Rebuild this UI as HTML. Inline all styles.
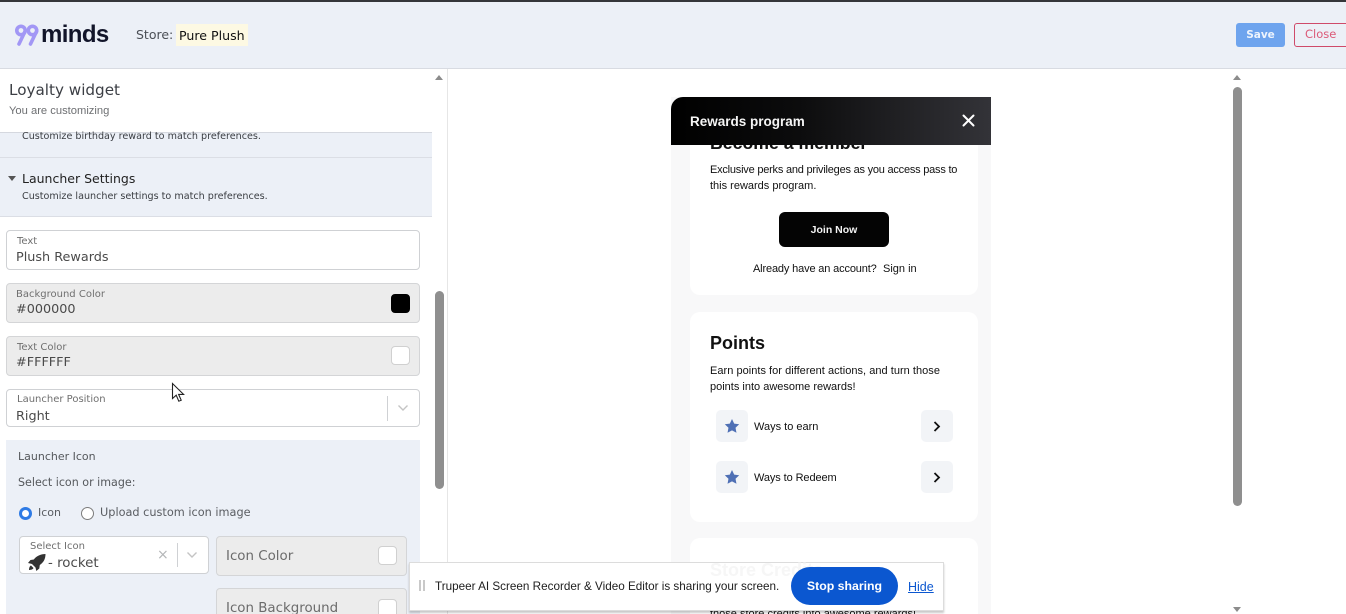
<!DOCTYPE html>
<html><head><meta charset="utf-8">
<style>
html,body{margin:0;padding:0;width:1346px;height:614px;overflow:hidden;background:#fff}
body{position:relative;font-family:"Liberation Sans",sans-serif;color:#333}
.a{position:absolute;white-space:nowrap}
.p{font-family:"DejaVu Sans",sans-serif}
.box{position:absolute;box-sizing:border-box;border:1px solid #cfd1d4;border-radius:4px;background:#fff}
.dis{background:#ececec;border-color:#d4d5d7}
.lab{font-size:10px;color:#6f6f6f;font-family:"DejaVu Sans",sans-serif}
.val{font-size:12.8px;color:#4a4a4a;font-family:"DejaVu Sans",sans-serif}
.sw{position:absolute;box-sizing:border-box;width:19px;height:19px;border-radius:4px;background:#fff;border:1px solid #d0d0d0}
.l{font-family:"Liberation Sans",sans-serif;color:#111;font-size:11px;line-height:16px}
.card{position:absolute;left:690px;width:288px;background:#fff;border-radius:10px}
.ic{position:absolute;width:32px;height:32px;background:#f2f4f7;border-radius:5px}
</style></head><body>

<div class="a" style="left:0;top:0;width:1346px;height:2px;background:#35363a"></div>
<div class="a" style="left:0;top:2px;width:1346px;height:66px;background:#ecf0f7"></div>
<div class="a" style="left:0;top:68px;width:1346px;height:1px;background:#d8dbe2"></div>

<svg class="a" style="left:14px;top:24px" width="27" height="22" viewBox="0 0 27 22">
<g fill="none" stroke="#a297f5" stroke-width="3.600" stroke-linecap="round">
<circle cx="7" cy="6.500" r="4.200"/><path d="M11 7.500 5 20"/>
<circle cx="18.500" cy="6.500" r="4.200"/><path d="M22.500 7.500 16.500 20"/></g></svg>
<div class="a" style="left:41px;top:20px;font-size:24px;line-height:30px;font-weight:700;color:#12152a;letter-spacing:-.6px;font-family:'Liberation Sans',sans-serif">minds</div>
<div class="a p" style="left:136px;top:26px;font-size:12.500px;line-height:17px;color:#4b4f56">Store:</div>
<div class="a" style="left:176px;top:24px;width:72px;height:22px;background:#fdf9e3"></div>
<div class="a p" style="left:179px;top:27px;font-size:12.600px;line-height:17px;color:#111">Pure Plush</div>

<div class="a" style="left:1236px;top:23px;width:49px;height:24px;background:#6ea4ee;border-radius:3px;color:#eef4fd;font-size:10.500px;font-weight:700;text-align:center;line-height:24px;font-family:'DejaVu Sans',sans-serif">Save</div>
<div class="a" style="left:1294px;top:23px;width:60px;height:24px;box-sizing:border-box;border:1px solid #cf4a6a;border-radius:3px;color:#db5a78;font-size:11.500px;line-height:21px;padding-left:10px;font-family:'DejaVu Sans',sans-serif">Close</div>

<!-- left panel -->
<div class="a" style="left:0;top:69px;width:432px;height:63px;background:#fff"></div>
<div class="a p" style="left:9px;top:80px;font-size:15.200px;line-height:20px;color:#3c3f45">Loyalty widget</div>
<div class="a" style="left:9px;top:104px;font-size:11.200px;line-height:15px;color:#6d6f72">You are customizing</div>

<div class="a" style="left:0;top:132px;width:432px;height:85px;background:#ecf0f7"></div>
<div class="a" style="left:0;top:132px;width:432px;height:1px;background:#d5d8df"></div>
<div class="a" style="left:0;top:157px;width:432px;height:1px;background:#dbdee5"></div>
<div class="a" style="left:0;top:216px;width:432px;height:1px;background:#dbdee5"></div>
<div class="a p" style="left:22px;top:130px;font-size:9.600px;line-height:14px;color:#3a3d42">Customize birthday reward to match preferences.</div>
<div class="a" style="left:8px;top:176px;width:0;height:0;border-left:4.500px solid transparent;border-right:4.500px solid transparent;border-top:5px solid #555"></div>
<div class="a p" style="left:22px;top:170px;font-size:12.500px;line-height:17px;color:#222">Launcher Settings</div>
<div class="a p" style="left:22px;top:190px;font-size:9.600px;line-height:14px;color:#3a3d42">Customize launcher settings to match preferences.</div>

<div class="box" style="left:6px;top:230px;width:414px;height:40px"></div>
<div class="a lab" style="left:17px;top:235px;line-height:13px">Text</div>
<div class="a val" style="left:16px;top:249px;line-height:17px">Plush Rewards</div>

<div class="box dis" style="left:6px;top:283px;width:414px;height:40px"></div>
<div class="a lab" style="left:16px;top:288px;line-height:13px">Background Color</div>
<div class="a val" style="left:16px;top:301px;line-height:17px">#000000</div>
<div class="sw" style="left:391px;top:294px;background:#000;border-color:#000"></div>

<div class="box dis" style="left:6px;top:336px;width:414px;height:40px"></div>
<div class="a lab" style="left:17px;top:341px;line-height:13px">Text Color</div>
<div class="a val" style="left:16px;top:354px;line-height:17px">#FFFFFF</div>
<div class="sw" style="left:391px;top:346px"></div>

<div class="box" style="left:6px;top:389px;width:414px;height:38px"></div>
<div class="a lab" style="left:17px;top:393px;line-height:13px">Launcher Position</div>
<div class="a val" style="left:16px;top:408px;line-height:17px">Right</div>
<div class="a" style="left:387px;top:396px;width:1px;height:25px;background:#cfd1d4"></div>
<svg class="a" style="left:397px;top:403px" width="12" height="10" viewBox="0 0 12 10"><path d="M1.500 2.500 6 7l4.500-4.500" fill="none" stroke="#c4c4c4" stroke-width="1.400"/></svg>

<!-- cursor -->
<svg class="a" style="left:171px;top:382px;z-index:3" width="15" height="21" viewBox="0 0 15 21"><path d="M1.500 1.500v15l3.700-3.300 2.600 6 2.400-1-2.600-5.800h5z" fill="#fff" stroke="#222" stroke-width="1.100"/></svg>

<div class="a" style="left:6px;top:440px;width:414px;height:174px;background:#ecf0f7"></div>
<div class="a p" style="left:18px;top:450px;font-size:11px;line-height:14px;color:#55585c">Launcher Icon</div>
<div class="a p" style="left:18px;top:476px;font-size:11.100px;line-height:14px;color:#55585c">Select icon or image:</div>
<div class="a" style="left:19px;top:507px;width:13px;height:13px;box-sizing:border-box;border-radius:50%;background:#fff;border:3.500px solid #2f7be5"></div>
<div class="a p" style="left:38px;top:506px;font-size:11px;line-height:14px;color:#5a5d62">Icon</div>
<div class="a" style="left:81px;top:507px;width:13px;height:13px;box-sizing:border-box;border-radius:50%;background:#fff;border:1px solid #7c7c7c"></div>
<div class="a p" style="left:100px;top:506px;font-size:11.300px;line-height:14px;color:#5a5d62">Upload custom icon image</div>

<div class="box" style="left:19px;top:536px;width:190px;height:38px"></div>
<div class="a lab" style="left:30px;top:540px;line-height:13px">Select Icon</div>
<svg class="a" style="left:28px;top:554px" width="18" height="17" viewBox="0 0 18 17"><path d="M17.500 0C12.500 0 8.500 2 5.800 5.500L2.500 6 0 9l4 1 3.500 3.500.8 3.500 3-2.500.5-3.500C15.500 8.500 17.500 5 17.500 0zM3 11.500C1.500 12 1 14.500 1 16c1.500 0 4-.5 4.500-2z" fill="#333"/></svg>
<div class="a val" style="left:48px;top:555px;line-height:17px;font-size:13.400px">- rocket</div>
<div class="a" style="left:157px;top:547px;font-size:14px;line-height:16px;color:#b4b6b8;font-family:'DejaVu Sans',sans-serif">×</div>
<div class="a" style="left:177px;top:543px;width:1px;height:24px;background:#cfd1d4"></div>
<svg class="a" style="left:186px;top:550px" width="12" height="10" viewBox="0 0 12 10"><path d="M1.500 2.500 6 7l4.500-4.500" fill="none" stroke="#c4c4c4" stroke-width="1.400"/></svg>

<div class="box dis" style="left:216px;top:536px;width:191px;height:40px"></div>
<div class="a val" style="left:226px;top:548px;line-height:17px;font-size:13.400px;color:#6b6b6b">Icon Color</div>
<div class="sw" style="left:378px;top:546px"></div>
<div class="box dis" style="left:216px;top:588px;width:191px;height:40px"></div>
<div class="a val" style="left:226px;top:600px;line-height:17px;font-size:13.400px;color:#6b6b6b">Icon Background</div>
<div class="sw" style="left:378px;top:599px"></div>

<!-- left scrollbar -->
<div class="a" style="left:447px;top:69px;width:1px;height:545px;background:#e6e6e6"></div>
<div class="a" style="left:435px;top:75px;width:0;height:0;border-left:4.500px solid transparent;border-right:4.500px solid transparent;border-bottom:5px solid #8c8c8c"></div>
<div class="a" style="left:435px;top:291px;width:9px;height:198px;background:#8f8f8f;border-radius:5px"></div>

<!-- widget -->
<div class="a" style="left:671px;top:97px;width:320px;height:517px;background:#f8f8f9"></div>
<div class="card" style="top:130px;height:165px"></div>
<div class="a" style="left:710px;top:131px;font-size:17.700px;line-height:24px;font-weight:700;color:#111">Become a member</div>
<div class="a" style="left:671px;top:97px;width:320px;height:48px;border-radius:12px 0 0 0;background:linear-gradient(90deg,#000 0%,#0c0c0d 40%,#333338 100%)"></div>
<div class="a" style="left:690px;top:113px;font-size:13.500px;line-height:18px;font-weight:700;color:#f5f5f5">Rewards program</div>
<svg class="a" style="left:962px;top:114px" width="13" height="13" viewBox="0 0 13 13"><path d="M1.500 1.500l10 10m0-10l-10 10" stroke="#fff" stroke-width="2" stroke-linecap="round"/></svg>

<div class="a l" style="left:710px;top:162px;letter-spacing:-.22px">Exclusive perks and privileges as you access pass to</div>
<div class="a l" style="left:710px;top:178px">this rewards program.</div>
<div class="a" style="left:779px;top:212px;width:110px;height:35px;background:#040404;border-radius:6px;color:#f3f3f3;font-size:10.500px;font-weight:700;text-align:center;line-height:36px">Join Now</div>
<div class="a l" style="left:753px;top:261px;letter-spacing:-.15px">Already have an account?</div>
<div class="a l" style="left:883px;top:261px">Sign in</div>

<div class="card" style="top:312px;height:210px"></div>
<div class="a" style="left:710px;top:331px;font-size:18px;line-height:24px;font-weight:700;color:#111">Points</div>
<div class="a l" style="left:710px;top:363px;letter-spacing:.03px">Earn points for different actions, and turn those</div>
<div class="a l" style="left:710px;top:379px">points into awesome rewards!</div>

<div class="ic" style="left:716px;top:410px"></div>
<svg class="a" style="left:724px;top:418px" width="16" height="16" viewBox="0 0 24 24"><path d="M12 1.500l3.300 6.900 7.500 1-5.500 5.200 1.400 7.500L12 18.500l-6.700 3.600 1.400-7.500L1.200 9.400l7.500-1z" fill="#4f70b5"/></svg>
<div class="a l" style="left:754px;top:419px">Ways to earn</div>
<div class="ic" style="left:921px;top:410px"></div>
<svg class="a" style="left:932px;top:421px" width="10" height="11" viewBox="0 0 10 11"><path d="M2.500 1l4.500 4.500L2.500 10" fill="none" stroke="#111" stroke-width="1.800"/></svg>

<div class="ic" style="left:716px;top:461px"></div>
<svg class="a" style="left:724px;top:469px" width="16" height="16" viewBox="0 0 24 24"><path d="M12 1.500l3.300 6.900 7.500 1-5.500 5.200 1.400 7.500L12 18.500l-6.700 3.600 1.400-7.500L1.200 9.400l7.500-1z" fill="#4f70b5"/></svg>
<div class="a l" style="left:754px;top:470px;letter-spacing:-.1px">Ways to Redeem</div>
<div class="ic" style="left:921px;top:461px"></div>
<svg class="a" style="left:932px;top:472px" width="10" height="11" viewBox="0 0 10 11"><path d="M2.500 1l4.500 4.500L2.500 10" fill="none" stroke="#111" stroke-width="1.800"/></svg>

<div class="card" style="top:538px;height:90px"></div>
<div class="a l" style="left:710px;top:606px">those store credits into awesome rewards!</div>

<!-- right scrollbar -->
<div class="a" style="left:1233px;top:75px;width:0;height:0;border-left:4.500px solid transparent;border-right:4.500px solid transparent;border-bottom:5px solid #8c8c8c"></div>
<div class="a" style="left:1233px;top:87px;width:9px;height:419px;background:#8f8f8f;border-radius:5px"></div>
<div class="a" style="left:1233px;top:607px;width:0;height:0;border-left:4.500px solid transparent;border-right:4.500px solid transparent;border-top:5px solid #8c8c8c"></div>

<!-- share bar -->
<div class="a" style="left:409px;top:562px;width:535px;height:49px;box-sizing:border-box;background:#fff;border:1px solid #dcdcdc;box-shadow:0 2px 2px rgba(0,0,0,.22)"></div>
<div class="a" style="left:710px;top:558px;font-size:18px;line-height:24px;font-weight:700;color:#f6f6f6">Store Credits</div>
<div class="a" style="left:419px;top:580px;width:2px;height:11px;background:#c9c9c9"></div>
<div class="a" style="left:423px;top:580px;width:2px;height:11px;background:#c9c9c9"></div>
<div class="a" style="left:435px;top:578px;font-size:11.700px;line-height:18px;color:#202020">Trupeer AI Screen Recorder &amp; Video Editor is sharing your screen.</div>
<div class="a" style="left:791px;top:567px;width:107px;height:38px;background:#0b57d0;border-radius:19px;color:#fff;font-size:12.300px;font-weight:700;text-align:center;line-height:39px">Stop sharing</div>
<div class="a" style="left:908px;top:578px;font-size:12.500px;line-height:18px;color:#0b57d0;text-decoration:underline">Hide</div>

</body></html>
